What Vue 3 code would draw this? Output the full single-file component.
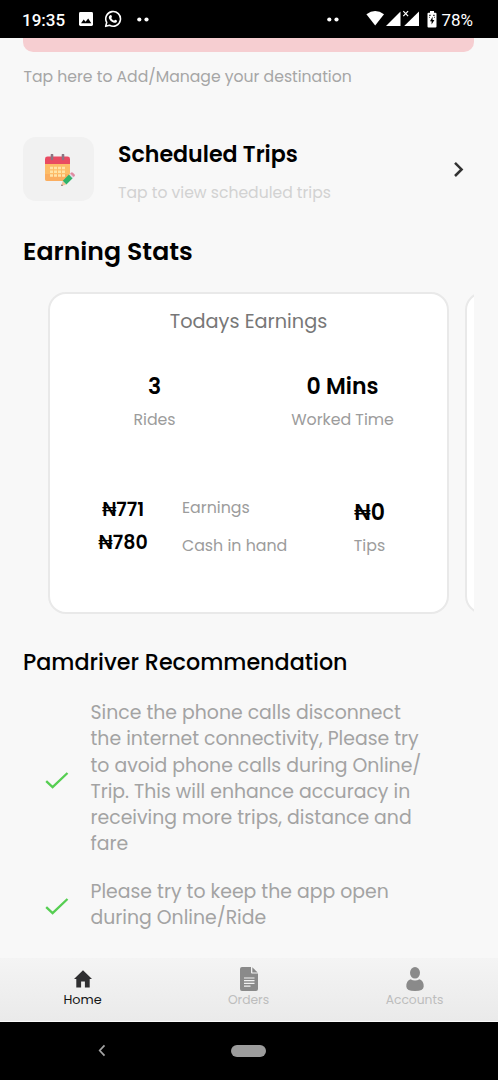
<script setup>
const tips = [
  [
    'Since the phone calls disconnect',
    'the internet connectivity, Please try',
    'to avoid phone calls during Online/',
    'Trip. This will enhance accuracy in',
    'receiving more trips, distance and',
    'fare',
  ],
  ['Please try to keep the app open', 'during Online/Ride'],
]
</script>

<template>
  <div class="screen">
    <header class="status">
      <span class="clock">19:35</span>
      <svg class="pic" width="14" height="14" viewBox="0 0 14 14">
        <rect width="14" height="14" rx="1.4" fill="#fff" />
        <path d="M2 11.2 4.7 7.6 6.6 9.8 9.2 6.5 12.3 11.2Z" fill="#000" />
      </svg>
      <svg class="wa" width="18" height="18" viewBox="0 0 24 24">
        <path d="M2.2 21.8 3.6 16.6A9.8 9.8 0 1 1 7.4 20.4Z" fill="none" stroke="#fff" stroke-width="2.1" stroke-linejoin="round" />
        <path d="M8.6 6.8c.5-.3 1-.2 1.2.3l.8 1.9c.2.5-.5 1.1-.9 1.6.9 1.8 2.1 2.9 3.9 3.7.5-.6 1-1.5 1.5-1.2l2 .9c.5.3.2 1.7-.4 2.3-1 1-2.6 1-4.3.3-2.6-1-4.5-2.9-5.7-5.3-.7-1.5-.1-3.6 1.9-4.5Z" fill="#fff" />
      </svg>
      <svg class="dots" width="12" height="5" viewBox="0 0 12 5" fill="#fff">
        <circle cx="2.3" cy="2.5" r="2.1" /><circle cx="9.5" cy="2.5" r="2.1" />
      </svg>
      <svg class="dots two" width="12" height="5" viewBox="0 0 12 5" fill="#fff">
        <circle cx="2.3" cy="2.5" r="2.1" /><circle cx="9.5" cy="2.5" r="2.1" />
      </svg>
      <svg class="net" width="54" height="18" viewBox="0 0 54 18" fill="#fff">
        <path d="M.4 4.2Q9.2-2 18 4.2L9.2 15.600Z" />
        <path d="M34.5 1.6V16H20Z" />
        <path d="M53 1.6V16H38.2L53 1.6Z" />
        <path d="m37.3 1.2 4.800 5m0-5-4.800 5" stroke="#fff" stroke-width="1.2" fill="none" />
      </svg>
      <svg class="bat" width="10" height="17" viewBox="0 0 10 17">
        <path d="M3 0h4v1.8h1.5q1 0 1 1V15.5q0 1-1 1h-7q-1 0-1-1V2.8q0-1 1-1H3Z" fill="#fff" />
        <path d="M5.6 5.8 3 10.200H4.600V13.500L7.400 9H5.600Z" fill="#000" />
        <path d="M2 4.300h1.800M6 4.300h1.800M2 6.300h.8M7.200 6.300h.8" stroke="#000" stroke-width=".9" />
      </svg>
      <span class="pct">78%</span>
    </header>

    <main>
      <div class="banner"></div>
      <p class="dest">Tap here to Add/Manage your destination</p>

      <section class="sched">
        <div class="tile">
          <svg width="32" height="34" viewBox="0 0 32 34">
            <path d="M1 9H26V24.5Q26 27 23.5 27H3.5Q1 27 1 24.5Z" fill="#fdbd68" />
            <path d="M1 20H26V24.5Q26 27 23.5 27H3.5Q1 27 1 24.5Z" fill="#fbae60" />
            <path d="M1 10V5Q1 2.6 3.5 2.6H23.5Q26 2.6 26 5V10Z" fill="#e94b62" />
            <path d="M8 .9V5M19 .9V5" stroke="#8d7482" stroke-width="2.6" stroke-linecap="round" />
            <path d="M6 14H21M6 17.700H21M6 21.400H21" stroke="#ffe3a6" stroke-width="2.500" stroke-dasharray="3 1" />
            <path d="m17.2 32 1.6-5.2 3.6 3.600Z" fill="#f3c49c" />
            <path d="m18.8 26.8 6.2-6.2 3.6 3.6-6.2 6.2Z" fill="#2fb36a" />
            <path d="m25 20.6 1.1-1.1 3.6 3.6-1.1 1.1Z" fill="#d8dbe2" />
            <path d="m26.1 19.5.8-.8q1-.9 2 0l1.600 1.600q1 1 0 2l-.8.8Z" fill="#e08aa2" />
            <path d="m17.2 32 .6-1.8 1.2 1.2Z" fill="#5b5660" />
          </svg>
        </div>
        <div class="sched-text">
          <h2>Scheduled Trips</h2>
          <p>Tap to view scheduled trips</p>
        </div>
        <svg class="go" width="12" height="18" viewBox="0 0 12 18">
          <path d="M2 2.8 8.6 9.4 2 16" fill="none" stroke="#333" stroke-width="2.5" />
        </svg>
      </section>

      <h1>Earning Stats</h1>

      <section class="cards">
        <article class="card">
          <h3>Todays Earnings</h3>
          <div class="top">
            <div class="stat rides"><b>3</b><span>Rides</span></div>
            <div class="stat time"><b>0 Mins</b><span>Worked Time</span></div>
          </div>
          <div class="bottom">
            <div class="sums"><b>₦771</b><b>₦780</b></div>
            <div class="labels"><span>Earnings</span><span>Cash in hand</span></div>
            <div class="stat tips"><b>₦0</b><span>Tips</span></div>
          </div>
        </article>
        <article class="card"></article>
      </section>

      <h2 class="rec">Pamdriver Recommendation</h2>
      <ul>
        <li v-for="(lines, i) in tips" :key="i">
          <svg width="24" height="19" viewBox="0 0 24 19">
            <path d="M1.2 10.2 7.6 16.2 22.5 2" fill="none" stroke="#56ce52" stroke-width="2.3" />
          </svg>
          <p><span v-for="line in lines" :key="line">{{ line }}</span></p>
        </li>
      </ul>
    </main>

    <nav>
      <a class="on">
        <svg width="20" height="24" viewBox="0 0 20 24">
          <path d="M10 3.3 19 12h-2.3v8.600h-4.800v-6H8.100V20.600H3.300v-8.600H1Z" fill="#2f2f31" />
        </svg>
        Home
      </a>
      <a>
        <svg width="20" height="24" viewBox="0 0 20 24">
          <path d="M3 0h9v5.5q0 1 1 1h6V22q0 2-2 2H3Q1 24 1 22V2Q1 0 3 0Z" fill="#8a8a8a" />
          <path d="M13.3.3 18.7 5.5H13.3Z" fill="#8a8a8a" />
          <path d="M5 11h10.5M5 13.7h10.5M5 16.4h10.5M5 19.1h6.5" stroke="#f1f1f1" stroke-width="1.2" />
        </svg>
        Orders
      </a>
      <a>
        <svg width="20" height="24" viewBox="0 0 20 24" fill="#8a8a8a">
          <ellipse cx="10" cy="5.8" rx="5" ry="5.8" />
          <path d="M5.5 12.3q4.500 2.400 9 0 4.200 1.200 4.200 7.200Q18.500 24 10 24T1.300 19.500q0-6 4.200-7.200Z" />
        </svg>
        Accounts
      </a>
    </nav>

    <footer>
      <svg width="8" height="13" viewBox="0 0 8 13">
        <path d="M6.5 1.3 1.7 6.5 6.5 11.7" fill="none" stroke="#a5a5a5" stroke-width="1.7" />
      </svg>
      <i></i>
    </footer>
  </div>
</template>

<style>
body { background: #f8f8f8; }
</style>

<style scoped>
.screen {
  width: 498px;
  height: 1080px;
  display: flex;
  flex-direction: column;
  overflow: hidden;
  background: #f8f8f8;
  font-family: Poppins, Inter, sans-serif;
  color: #000;
}
h1, h2, h3, p, ul { margin: 0; padding: 0; font-weight: 400; }
svg { display: block; flex: none; }
span, a, h1, h2, h3, p, b { white-space: nowrap; }

.status {
  flex: none;
  height: 38px;
  box-sizing: border-box;
  padding: 0 25px 0 22px;
  background: #000;
  color: #fff;
  display: flex;
  align-items: center;
  font-family: Roboto, sans-serif;
  font-size: 17px;
}
.clock { width: 57px; font-weight: 500; line-height: 38px; padding-top: 1px; }
.wa { margin-left: 11px; }
.dots { margin-left: 15px; }
.two { margin-left: 178px; }
.net { margin-left: 27px; }
.bat { margin-left: 7px; }
.pct { margin-left: auto; line-height: 38px; padding-top: 1px; }

main { flex: none; height: 920px; padding: 0 24px 0 23px; box-sizing: border-box; }
.banner { height: 14px; background: #f6ced1; border-radius: 0 0 10px 10px; }
.dest { margin-top: 13px; font-size: 15.65px; line-height: 24px; color: #a6a6a6; padding-left: .5px; }

.sched { display: flex; height: 64px; margin-top: 48px; }
.tile {
  width: 71px;
  height: 64px;
  border-radius: 13px;
  background: #f1f1f1;
  display: flex;
  align-items: center;
  justify-content: center;
}
.tile svg { margin: 3px 0 0 3px; }
.sched-text { margin: 1px 0 0 24px; flex: 1; }
.sched-text h2 { font-size: 22.15px; line-height: 34px; font-weight: 600; }
.sched-text p { margin-top: 9px; font-size: 15.62px; line-height: 24px; color: #d2d2d2; }
.go { margin: 23px 9px 0 0; }

h1 { margin-top: 31px; font-size: 25.2px; line-height: 40px; font-weight: 600; }

.cards { margin-top: 20px; padding-left: 25px; display: flex; gap: 16px; overflow: hidden; }
.card {
  flex: none;
  width: 401px;
  height: 322px;
  box-sizing: border-box;
  border: 2px solid #e9e9e9;
  border-radius: 18px;
  background: #fff;
}
h3 { margin-top: 13px; text-align: center; font-size: 19.3px; line-height: 29px; color: #777; }
.top { display: grid; grid-template-columns: 209px 167px; margin-top: 33px; }
.stat { display: flex; flex-direction: column; align-items: center; }
.stat b { font-size: 22px; line-height: 35px; font-weight: 600; }
.stat span, .labels span { font-size: 15.8px; line-height: 24px; color: #9c9c9c; }
.stat span { margin-top: 4px; }
.bottom { display: grid; grid-template-columns: 132px 124px 127px; margin-top: 62px; }
.sums { display: flex; flex-direction: column; align-items: center; margin: -1px 0 0 14px; }
.sums b { font-size: 19px; line-height: 33px; font-weight: 600; }
.labels { display: flex; flex-direction: column; gap: 14px; margin-top: 2px; }
.tips b { margin-top: 1px; }

.rec { margin-top: 32px; font-size: 22.25px; line-height: 34px; font-weight: 500; }
ul { list-style: none; margin-top: 20px; display: flex; flex-direction: column; gap: 21.5px; padding-left: 22px; }
li { display: flex; align-items: center; }
li svg { position: relative; top: 1.5px; }
li p { margin-left: 21.5px; font-size: 18.85px; line-height: 26.25px; color: #a3a3a3; }
li span { display: block; }

nav {
  flex: none;
  height: 63.5px;
  box-sizing: border-box;
  display: grid;
  grid-template-columns: repeat(3, 166px);
  background: linear-gradient(#f4f4f4, #eaeaea);
  border-bottom: 1px solid #fafafa;
}
nav a {
  padding: 9px 1px 0 0;
  display: flex;
  flex-direction: column;
  align-items: center;
  font-size: 12.3px;
  line-height: 18px;
  color: #bdbdbd;
}
nav .on { color: #161616; font-size: 12.8px; }

footer { flex: 1; background: #000; display: flex; align-items: center; padding-left: 98px; }
footer i { width: 35px; height: 12px; border-radius: 6px; background: #9c9c9c; margin-left: 125px; }
</style>
